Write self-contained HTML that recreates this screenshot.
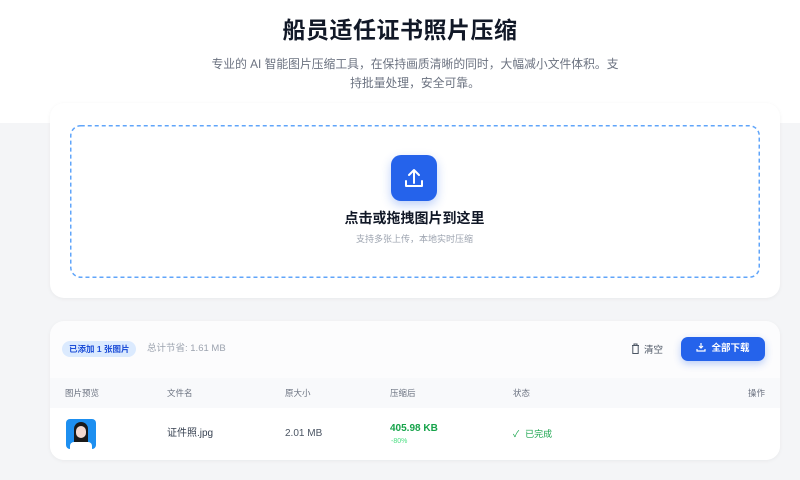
<!DOCTYPE html>
<html><head><meta charset="utf-8"><style>
*{margin:0;padding:0;box-sizing:border-box}
body{width:800px;height:480px;overflow:hidden;background:#f4f5f7;font-family:"Liberation Sans","Noto Sans CJK SC",sans-serif;position:relative}
.hdr{position:absolute;left:0;top:0;width:800px;height:123px;background:#fff}
h1{position:absolute;top:14px;width:800px;text-align:center;font-size:23px;line-height:32px;font-weight:700;color:#111827;letter-spacing:0.5px}
.sub{position:absolute;top:55px;left:209px;width:412px;text-align:center;font-size:11.8px;line-height:19px;color:#6b7280}
.card{position:absolute;left:50px;width:730px;background:#fff;border-radius:14px;box-shadow:0 1px 4px rgba(0,0,0,.05)}
.ic{position:absolute;left:321px;top:30px;width:46px;height:46px;border-radius:10px;background:#2563eb;box-shadow:0 4px 10px rgba(37,99,235,.3)}
.t1{position:absolute;top:84px;width:100%;text-align:center;font-size:14px;line-height:18px;font-weight:700;color:#111827}
.t2{position:absolute;top:108px;width:100%;text-align:center;font-size:9px;line-height:12px;color:#9ca3af}
.abs{position:absolute;line-height:12px}
.th{font-size:8.5px;color:#6b7280;position:absolute;top:66px;line-height:12px}
</style></head><body>
<div class="hdr"></div>
<h1>船员适任证书照片压缩</h1>
<div class="sub">专业的 AI 智能图片压缩工具，在保持画质清晰的同时，大幅减小文件体积。支<br>持批量处理，安全可靠。</div>
<div class="card" style="top:103px;height:195px">
 <svg style="position:absolute;left:20px;top:22px" width="690" height="153"><rect x="0.75" y="0.75" width="688.5" height="151.5" rx="10" fill="none" stroke="#60a5fa" stroke-width="1.5" stroke-dasharray="4 3"/></svg>
 <div style="position:absolute;left:20px;top:22px;width:689px;height:152px">
  <div class="ic"><svg width="46" height="46" viewBox="0 0 46 46" fill="none" stroke="#fff" stroke-width="2" stroke-linecap="round" stroke-linejoin="round"><path d="M23 28V16M18 20l5-5 5 5M15 26v5h16v-5"/></svg></div>
  <div class="t1">点击或拖拽图片到这里</div>
  <div class="t2">支持多张上传，本地实时压缩</div>
 </div>
</div>
<div class="card" style="top:321px;height:139px;background:#fcfcfd;overflow:hidden">
 <div class="abs" style="left:12px;top:20px;height:16px;padding:0 7px;border-radius:8px;background:#dbeafe;color:#1d4ed8;font-size:8.5px;font-weight:700;line-height:16px">已添加 1 张图片</div>
 <div class="abs" style="left:97px;top:22px;font-size:9.5px;color:#9ca3af">总计节省: 1.61 MB</div>
 <div class="abs" style="left:581px;top:22px;font-size:9.5px;color:#4b5563"><svg width="9" height="11" viewBox="0 0 9 11" style="vertical-align:-1px;margin-right:4px" fill="none" stroke="#4b5563" stroke-width="1"><path d="M1 2.5h7M3 2.5V1h3v1.5M1.8 2.5v8h5.4v-8"/></svg>清空</div>
 <div class="abs" style="left:631px;top:16px;width:84px;height:24px;border-radius:7px;background:#2563eb;color:#fff;font-size:9.5px;font-weight:700;line-height:24px;text-align:center;box-shadow:0 3px 8px rgba(37,99,235,.3)"><svg width="10" height="10" viewBox="0 0 10 10" style="vertical-align:-1px;margin-right:5px" fill="none" stroke="#fff" stroke-width="1.2"><path d="M5 1v5M3 4l2 2 2-2M1 7v2h8V7"/></svg>全部下载</div>
 <div class="abs" style="left:0;top:57px;width:730px;height:30px;background:#f8f9fb"></div>
 <div class="th" style="left:15px">图片预览</div>
 <div class="th" style="left:117px">文件名</div>
 <div class="th" style="left:235px">原大小</div>
 <div class="th" style="left:340px">压缩后</div>
 <div class="th" style="left:463px">状态</div>
 <div class="th" style="left:698px">操作</div>
 <div class="abs" style="left:0;top:87px;width:730px;height:52px;background:#fff"></div>
 <div class="abs" style="left:16px;top:98px;width:30px;height:30px;border-radius:4px;background:#1d8ff0;overflow:hidden"><div style="position:absolute;left:8px;top:3px;width:14px;height:24px;background:#1a1a1a;border-radius:7px 7px 2px 2px"></div><div style="position:absolute;left:10px;top:7px;width:10px;height:12px;background:#f3d9cf;border-radius:5px"></div><div style="position:absolute;left:4px;top:23px;width:22px;height:8px;background:#fff;border-radius:4px 4px 0 0"></div></div>
 <div class="abs" style="left:117px;top:107px;font-size:10px;color:#374151">证件照.jpg</div>
 <div class="abs" style="left:235px;top:107px;font-size:10px;color:#4b5563">2.01 MB</div>
 <div class="abs" style="left:340px;top:102px;font-size:10px;font-weight:700;color:#16a34a">405.98 KB</div>
 <div class="abs" style="left:341px;top:115px;font-size:7px;color:#4ade80">-80%</div>
 <div class="abs" style="left:463px;top:107px;font-size:9px;color:#16a34a"><span style="margin-right:6px">✓</span>已完成</div>
</div>
</body></html>
